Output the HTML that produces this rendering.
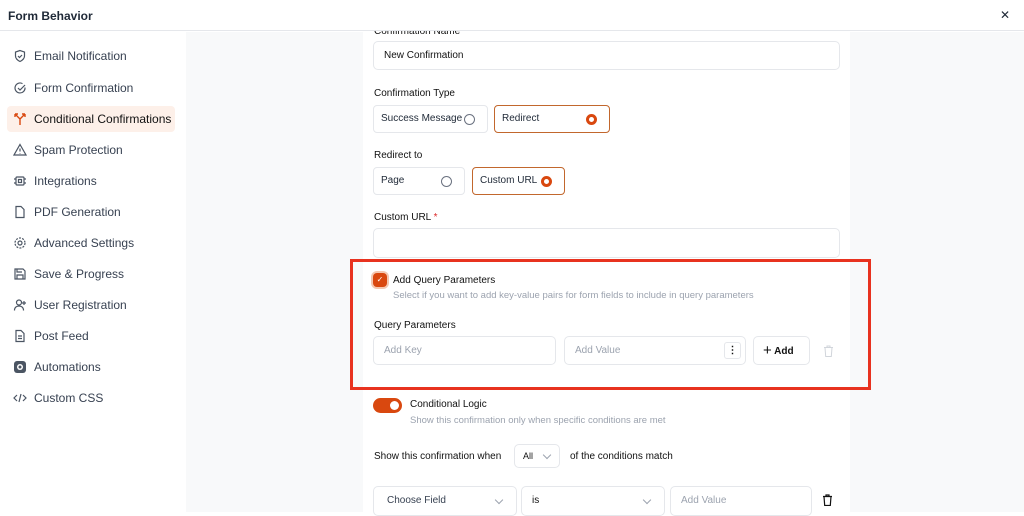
<!DOCTYPE html>
<html><head><meta charset="utf-8"><style>
*{box-sizing:border-box;margin:0;padding:0}
body{width:1024px;height:512px;overflow:hidden;font-family:"Liberation Sans",sans-serif;background:#fff;position:relative;color:#1f2937}
.hdr{position:absolute;left:0;top:0;width:1024px;height:31px;border-bottom:1px solid #e5e7eb;background:#fff;z-index:5}
.hdr b{position:absolute;left:8px;top:9px;font-size:12px;font-weight:bold}
.hdr .x{position:absolute;right:14px;top:8px;font-size:12px}
.side{position:absolute;left:0;top:32px;width:186px;height:480px;background:#fff}
.it{position:absolute;left:7px;width:168px;height:26px;font-size:12px;color:#374151;line-height:26px;padding-left:27px;border-radius:4px}
.it.act{background:#fdf0e9;color:#111}
.it svg{position:absolute;left:6px;top:6px}
.main{position:absolute;left:186px;top:32px;width:838px;height:480px;background:#f8f9fa}
.card{position:absolute;left:363px;top:32px;width:487px;height:480px;background:#fff}
.lbl{position:absolute;font-size:10px;color:#111}
.inp{position:absolute;border:1px solid #e5e7eb;border-radius:5px;background:#fff;font-size:10px;color:#111;padding-left:10px}
.ph{color:#9ca3af}
.rad{position:absolute;border:1px solid #e5e7eb;border-radius:4px;background:#fff;font-size:10px;padding-left:7px;line-height:26px;height:28px}
.rad.on{border-color:#c2672d}
.c{position:absolute;top:8px;width:11px;height:11px;border-radius:50%;border:1px solid #6b7280}
.c.on{border:3px solid #d9480f;background:#fff}
.dd{position:absolute;top:14px;width:6px;height:6px;border-right:1px solid #9ca3af;border-bottom:1px solid #9ca3af;transform:rotate(45deg)}
</style></head><body>
<div class="hdr"><b>Form Behavior</b><span class="x">✕</span></div>
<div class="side">
<div class="it" style="top:11px"><svg width="14" height="14" viewBox="0 0 14 14" fill="none" stroke="#4b5563" stroke-width="1.2"><path d="M7 1.5L2.5 3v4c0 3 2.5 4.5 4.5 5.5 2-1 4.5-2.5 4.5-5.5V3z"/><path d="M5 7l1.5 1.5L9 6"/></svg>Email Notification</div>
<div class="it" style="top:43px"><svg width="14" height="14" viewBox="0 0 14 14" fill="none" stroke="#4b5563" stroke-width="1.2"><path d="M12 6.5A5 5 0 1 1 9.5 2.6"/><path d="M5 7l2 2 5-5"/></svg>Form Confirmation</div>
<div class="it act" style="top:74px"><svg width="14" height="14" viewBox="0 0 14 14" fill="none" stroke="#d9480f" stroke-width="1.4"><path d="M2 2l5 5v6M12 2L7 7M2 2h3M2 2v3M12 2H9M12 2v3"/></svg>Conditional Confirmations</div>
<div class="it" style="top:105px"><svg width="14" height="14" viewBox="0 0 14 14" fill="none" stroke="#4b5563" stroke-width="1.2"><path d="M7 1.5L13 12H1z"/><path d="M7 5.5v3M7 10v.5"/></svg>Spam Protection</div>
<div class="it" style="top:136px"><svg width="14" height="14" viewBox="0 0 14 14" fill="none" stroke="#4b5563" stroke-width="1.2"><rect x="3" y="3" width="8" height="8" rx="1"/><rect x="5.5" y="5.5" width="3" height="3"/><path d="M1 5h2M1 9h2M11 5h2M11 9h2"/></svg>Integrations</div>
<div class="it" style="top:167px"><svg width="14" height="14" viewBox="0 0 14 14" fill="none" stroke="#4b5563" stroke-width="1.2"><path d="M3 1.5h5l3 3v8H3z"/></svg>PDF Generation</div>
<div class="it" style="top:198px"><svg width="14" height="14" viewBox="0 0 14 14" fill="none" stroke="#4b5563" stroke-width="1.2"><circle cx="7" cy="7" r="2"/><circle cx="7" cy="7" r="5" stroke-dasharray="2 1.2"/></svg>Advanced Settings</div>
<div class="it" style="top:229px"><svg width="14" height="14" viewBox="0 0 14 14" fill="none" stroke="#4b5563" stroke-width="1.2"><path d="M2 2h8l2 2v8H2z"/><path d="M4 12V8h6v4M4 2v3h5"/></svg>Save &amp; Progress</div>
<div class="it" style="top:260px"><svg width="14" height="14" viewBox="0 0 14 14" fill="none" stroke="#4b5563" stroke-width="1.2"><circle cx="6" cy="4.5" r="2.5"/><path d="M1.5 12.5c0-3 2-4.5 4.5-4.5s4.5 1.5 4.5 4.5M11 3v4M9 5h4"/></svg>User Registration</div>
<div class="it" style="top:291px"><svg width="14" height="14" viewBox="0 0 14 14" fill="none" stroke="#4b5563" stroke-width="1.2"><path d="M3 1.5h5l3 3v8H3z"/><path d="M5 7h4M5 9.5h4"/></svg>Post Feed</div>
<div class="it" style="top:322px"><svg width="14" height="14" viewBox="0 0 14 14"><rect x="1" y="1" width="12" height="12" rx="3" fill="#4b5563"/><circle cx="7" cy="7" r="3" fill="#fff"/><circle cx="7" cy="7" r="1.5" fill="#4b5563"/></svg>Automations</div>
<div class="it" style="top:353px"><svg width="14" height="14" viewBox="0 0 14 14" fill="none" stroke="#4b5563" stroke-width="1.2"><path d="M4 4L1 7l3 3M10 4l3 3-3 3M8 3L6 11"/></svg>Custom CSS</div>
</div>
<div class="main"></div>
<div class="card"></div>
<div class="lbl" style="left:374px;top:26px">Confirmation Name</div>
<div class="inp" style="left:373px;top:41px;width:467px;height:29px;line-height:27px">New Confirmation</div>
<div class="lbl" style="left:374px;top:88px">Confirmation Type</div>
<div class="rad" style="left:373px;top:105px;width:115px">Success Message<span class="c" style="left:90px"></span></div>
<div class="rad on" style="left:494px;top:105px;width:116px">Redirect<span class="c on" style="left:91px"></span></div>
<div class="lbl" style="left:374px;top:150px">Redirect to</div>
<div class="rad" style="left:373px;top:167px;width:92px">Page<span class="c" style="left:67px"></span></div>
<div class="rad on" style="left:472px;top:167px;width:93px">Custom URL<span class="c on" style="left:68px"></span></div>
<div class="lbl" style="left:374px;top:212px">Custom URL <span style="color:#dc2626">*</span></div>
<div class="inp" style="left:373px;top:228px;width:467px;height:30px"></div>
<div style="position:absolute;left:350px;top:259px;width:521px;height:131px;border:3px solid #e8321f"></div>
<div style="position:absolute;left:373px;top:273px;width:14px;height:14px;border-radius:4px;background:#d9480f;box-shadow:0 0 0 2px #f4c7b0;color:#fff;font-size:8px;text-align:center;line-height:14px">✓</div>
<div class="lbl" style="left:393px;top:275px">Add Query Parameters</div>
<div class="lbl" style="left:393px;top:290px;color:#9ca3af;font-size:9.5px">Select if you want to add key-value pairs for form fields to include in query parameters</div>
<div class="lbl" style="left:374px;top:320px">Query Parameters</div>
<div class="inp ph" style="left:373px;top:336px;width:183px;height:29px;line-height:27px">Add Key</div>
<div class="inp ph" style="left:564px;top:336px;width:182px;height:29px;line-height:27px">Add Value<span style="position:absolute;right:4px;top:5px;width:17px;height:17px;border:1px solid #e5e7eb;border-radius:3px;color:#111;text-align:center;line-height:15px;font-weight:bold">⋮</span></div>
<div class="inp" style="left:753px;top:336px;width:57px;height:29px;line-height:27px;font-weight:bold;padding-left:9px"><span style="font-size:15px;font-weight:normal;vertical-align:-1px">+</span> Add</div>
<svg style="position:absolute;left:823px;top:345px" width="11" height="12" viewBox="0 0 11 12" fill="none" stroke="#d1d5db"><path d="M1 2.5h9M4 2.5V1h3v1.5M2 2.5l.7 9h5.6l.7-9"/></svg>
<div style="position:absolute;left:373px;top:398px;width:29px;height:15px;border-radius:8px;background:#d9480f"><div style="position:absolute;right:3px;top:3px;width:9px;height:9px;border-radius:50%;background:#fff"></div></div>
<div class="lbl" style="left:410px;top:399px">Conditional Logic</div>
<div class="lbl" style="left:410px;top:415px;color:#9ca3af;font-size:9.5px">Show this confirmation only when specific conditions are met</div>
<div class="lbl" style="left:374px;top:451px">Show this confirmation when</div>
<div class="inp" style="left:514px;top:444px;width:46px;height:24px;line-height:22px;font-size:9px;padding-left:8px">All<span class="dd" style="left:29px;top:7px"></span></div>
<div class="lbl" style="left:570px;top:451px">of the conditions match</div>
<div class="inp" style="left:373px;top:486px;width:144px;height:30px;line-height:28px;padding-left:13px;color:#374151">Choose Field<span class="dd" style="left:122px;top:10px"></span></div>
<div class="inp" style="left:521px;top:486px;width:144px;height:30px;line-height:28px;color:#111">is<span class="dd" style="left:122px;top:10px"></span></div>
<div class="inp ph" style="left:670px;top:486px;width:142px;height:30px;line-height:28px">Add Value</div>
<svg style="position:absolute;left:822px;top:494px" width="11" height="12" viewBox="0 0 11 12" fill="none" stroke="#111" stroke-width="1.2"><path d="M1 2.5h9M4 2.5V1h3v1.5M2 2.5l.7 9h5.6l.7-9"/></svg>
</body></html>
